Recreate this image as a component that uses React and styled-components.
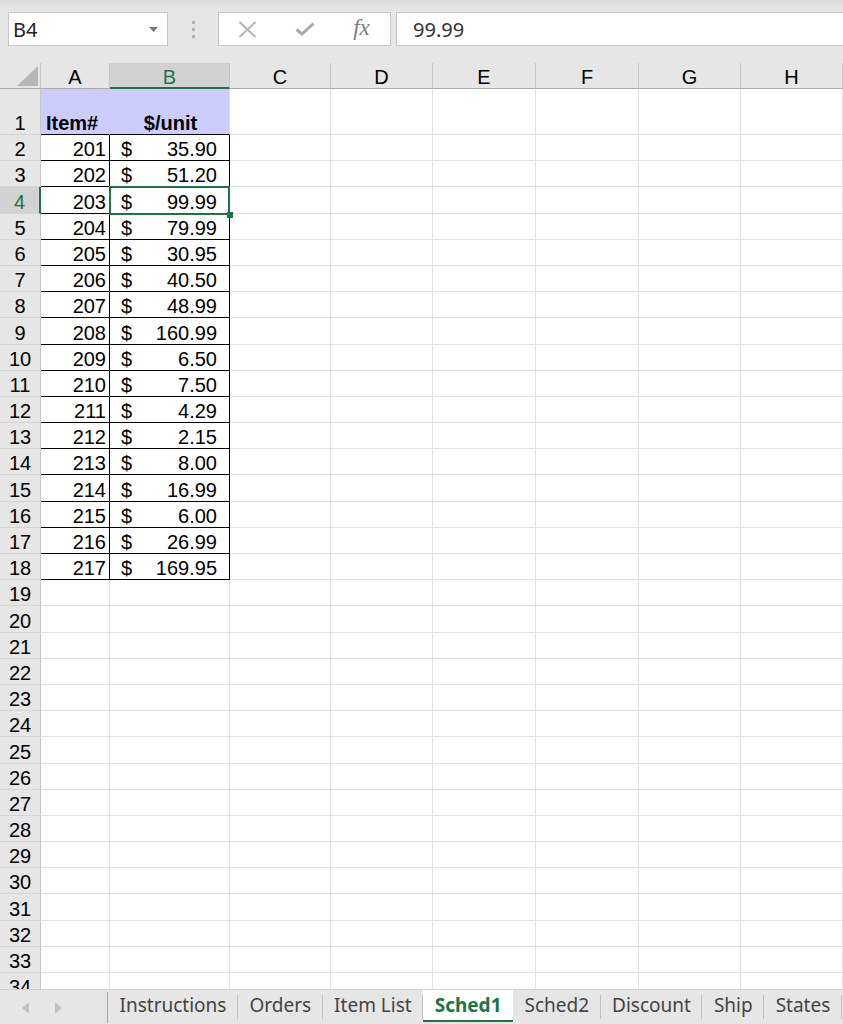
import styled, {createGlobalStyle, css} from 'styled-components'

const GREEN = '#217346'
const GRID = '#e1e1e1'
const HEAD_LINE = '#c6c6c6'

const COLUMNS = [
  {name: 'A', width: 69},
  {name: 'B', width: 120},
  {name: 'C', width: 101},
  {name: 'D', width: 102},
  {name: 'E', width: 103},
  {name: 'F', width: 103},
  {name: 'G', width: 102},
  {name: 'H', width: 102},
]

const ITEMS = [
  [201, '35.90'], [202, '51.20'], [203, '99.99'], [204, '79.99'], [205, '30.95'],
  [206, '40.50'], [207, '48.99'], [208, '160.99'], [209, '6.50'], [210, '7.50'],
  [211, '4.29'], [212, '2.15'], [213, '8.00'], [214, '16.99'], [215, '6.00'],
  [216, '26.99'], [217, '169.95'],
]

const TABS = ['Instructions', 'Orders', 'Item List', 'Sched1', 'Sched2', 'Discount', 'Ship', 'States']
const ACTIVE_TAB = 'Sched1'
const ROW_COUNT = 34
const SEL = {col: 'B', row: 4}

const GlobalStyle = createGlobalStyle`
  html, body { margin: 0; padding: 0; background: #e6e6e6; }
  body { font-family: "Liberation Sans", Arial, sans-serif; }
`

const Window = styled.div`
  width: 843px;
  height: 1024px;
  display: flex;
  flex-direction: column;
  overflow: hidden;
  background: #e6e6e6;
`

/* formula bar */
const Toolbar = styled.div`
  height: 63px;
  flex: none;
  box-sizing: border-box;
  display: flex;
  align-items: flex-start;
  padding: 12px 0 0 8px;
  background: linear-gradient(#dcdcdc, #e6e6e6 9px);
`

const NameBox = styled.div`
  width: 160px;
  height: 34px;
  box-sizing: border-box;
  border: 1px solid ${HEAD_LINE};
  background: #fff;
  display: flex;
  align-items: center;
  justify-content: space-between;
  padding: 0 9px 0 4px;
  font: 20px "Noto Sans", sans-serif;
  color: #222;
`

const Grip = styled.div`
  width: 50px;
  height: 34px;
  display: flex;
  flex-direction: column;
  align-items: center;
  justify-content: center;
  gap: 4px;

  span {
    width: 3px;
    height: 3px;
    background: #b4b4b4;
  }
`

const FxBox = styled.div`
  width: 173px;
  height: 34px;
  box-sizing: border-box;
  border: 1px solid ${HEAD_LINE};
  background: #fff;
  display: grid;
  grid-template-columns: repeat(3, 57px);
  align-items: center;
  justify-items: center;
`

const FxLabel = styled.span`
  font: italic 23px "Liberation Serif", serif;
  color: #7a7a7a;
  margin-top: -2px;
`

const FormulaInput = styled.div`
  flex: 1;
  height: 34px;
  margin-left: 5px;
  box-sizing: border-box;
  border: 1px solid ${HEAD_LINE};
  border-right: none;
  background: #fff;
  display: flex;
  align-items: center;
  padding-left: 16px;
  font: 20px "Noto Sans", sans-serif;
  color: #333;
`

/* sheet grid */
const Sheet = styled.div`
  flex: 1;
  min-height: 0;
  overflow: hidden;
  background: #fff;
  display: grid;
  grid-template-columns: 41px ${COLUMNS.map(c => c.width + 'px').join(' ')};
  grid-template-rows: 26px 46px repeat(${ROW_COUNT - 1}, 26.2px);
  align-content: start;
`

const Corner = styled.div`
  box-sizing: border-box;
  background: #e6e6e6;
  border-right: 1px solid ${HEAD_LINE};
  border-bottom: 1px solid #ababab;
  display: flex;
  align-items: flex-end;
  justify-content: flex-end;
  padding: 0 2px 2px 0;
`

const ColHead = styled.div`
  box-sizing: border-box;
  background: ${p => (p.$active ? '#d2d2d2' : '#e6e6e6')};
  border-right: 1px solid ${HEAD_LINE};
  border-bottom: ${p => (p.$active ? `2px solid ${GREEN}` : '1px solid #ababab')};
  color: ${p => (p.$active ? GREEN : '#000')};
  display: flex;
  align-items: center;
  justify-content: center;
  padding-top: 4px;
  font: 20px "Liberation Sans", Arial, sans-serif;
`

const RowHead = styled.div`
  box-sizing: border-box;
  background: ${p => (p.$active ? '#d2d2d2' : '#e6e6e6')};
  border-right: ${p => (p.$active ? `2px solid ${GREEN}` : `1px solid ${HEAD_LINE}`)};
  border-bottom: 1px solid #d4d4d4;
  color: ${p => (p.$active ? GREEN : '#000')};
  display: flex;
  align-items: flex-end;
  justify-content: center;
  font: 20px/21px "Liberation Sans", Arial, sans-serif;
`

const Cell = styled.div`
  box-sizing: border-box;
  position: relative;
  min-width: 0;
  background: ${p => p.$fill || '#fff'};
  border-right: 1px solid ${p => p.$edgeRight || GRID};
  border-bottom: 1px solid ${p => p.$edgeBottom || GRID};
  display: flex;
  align-items: flex-end;
  justify-content: ${p => p.$align || 'flex-start'};
  padding: 0 3px 0 5px;
  font: ${p => (p.$bold ? 700 : 400)} 20px/21px "Liberation Sans", Arial, sans-serif;
  color: #000;
  white-space: nowrap;

  ${p => p.$selected && css`
    &::after {
      content: '';
      position: absolute;
      top: -1px;
      left: -1px;
      right: -1px;
      bottom: -2px;
      border: 2px solid ${GREEN};
      z-index: 2;
    }
    &::before {
      content: '';
      position: absolute;
      right: -4px;
      bottom: -5px;
      width: 6px;
      height: 6px;
      background: ${GREEN};
      z-index: 3;
    }
  `}
`

const Money = styled.span`
  flex: 1;
  display: flex;
  justify-content: space-between;
  padding: 0 9px 0 6px;
`

/* sheet tabs */
const TabBar = styled.div`
  height: 35px;
  flex: none;
  box-sizing: border-box;
  display: flex;
  align-items: flex-start;
  background: #e6e6e6;
  border-top: 1px solid #d0d0d0;
  overflow: hidden;
`

const TabNav = styled.div`
  flex: none;
  width: 108px;
  height: 31px;
  box-sizing: border-box;
  display: flex;
  align-items: center;
  gap: 26px;
  padding-left: 22px;
  border-right: 1px solid #a8a8a8;
  margin-top: 2px;
`

const Tab = styled.div`
  flex: none;
  position: relative;
  height: 32px;
  box-sizing: border-box;
  display: flex;
  align-items: center;
  padding: 0 11.5px 2px;
  background: ${p => (p.$active ? '#fff' : 'transparent')};
  box-shadow: ${p => (p.$active ? `inset 0 -2px 0 ${GREEN}` : 'none')};
  color: ${p => (p.$active ? GREEN : '#444')};
  font: ${p => (p.$active ? 700 : 400)} 19px "Noto Sans", sans-serif;
  white-space: nowrap;

  &::after {
    content: '';
    position: absolute;
    right: 0;
    top: 5px;
    bottom: 3px;
    width: 1px;
    background: ${p => (p.$active ? 'transparent' : '#c0c0c0')};
  }
`

function cellProps(col, row) {
  const inTable = row >= 2 && row <= 18
  if (row === 1 && col === 'A') {
    return {$fill: '#ccccff', $edgeRight: '#ccccff', $edgeBottom: '#000', $bold: true}
  }
  if (row === 1 && col === 'B') {
    return {$fill: '#ccccff', $edgeBottom: '#000', $bold: true, $align: 'center'}
  }
  if (inTable && col === 'A') {
    return {$edgeRight: '#000', $edgeBottom: '#000', $align: 'flex-end'}
  }
  if (inTable && col === 'B') {
    return {$edgeRight: '#000', $edgeBottom: '#000'}
  }
  return {}
}

function cellContent(col, row) {
  if (row === 1) return col === 'A' ? 'Item#' : col === 'B' ? '$/unit' : null
  const item = ITEMS[row - 2]
  if (!item) return null
  if (col === 'A') return item[0]
  if (col === 'B') {
    return (
      <Money>
        <span>$</span>
        <span>{item[1]}</span>
      </Money>
    )
  }
  return null
}

export default function App() {
  const rows = Array.from({length: ROW_COUNT}, (_, i) => i + 1)
  return (
    <Window>
      <GlobalStyle />
      <Toolbar>
        <NameBox>
          <span>B4</span>
          <svg width="9" height="5" viewBox="0 0 9 5"><polygon points="0,0 9,0 4.5,5" fill="#777" /></svg>
        </NameBox>
        <Grip><span /><span /><span /></Grip>
        <FxBox>
          <svg width="19" height="17" viewBox="0 0 19 17">
            <path d="M1.5 1 L17.5 16 M17.5 1 L1.5 16" stroke="#b0b0b0" strokeWidth="1.8" fill="none" />
          </svg>
          <svg width="20" height="14" viewBox="0 0 20 14">
            <path d="M1.5 7.5 L7 12 L18.5 1.5" stroke="#a8a8a8" strokeWidth="3" fill="none" />
          </svg>
          <FxLabel>fx</FxLabel>
        </FxBox>
        <FormulaInput>99.99</FormulaInput>
      </Toolbar>

      <Sheet>
        <Corner>
          <svg width="21" height="20" viewBox="0 0 21 20"><polygon points="21,0 21,20 0,20" fill="#b6b6b6" /></svg>
        </Corner>
        {COLUMNS.map(c => (
          <ColHead key={c.name} $active={c.name === SEL.col}>{c.name}</ColHead>
        ))}
        {rows.map(r => [
          <RowHead key={'h' + r} $active={r === SEL.row}>{r}</RowHead>,
          ...COLUMNS.map(c => (
            <Cell
              key={c.name + r}
              {...cellProps(c.name, r)}
              $selected={c.name === SEL.col && r === SEL.row}
            >
              {cellContent(c.name, r)}
            </Cell>
          )),
        ])}
      </Sheet>

      <TabBar>
        <TabNav>
          <svg width="7" height="12" viewBox="0 0 7 12"><polygon points="7,0 7,12 0,6" fill="#c2c2c2" /></svg>
          <svg width="7" height="12" viewBox="0 0 7 12"><polygon points="0,0 0,12 7,6" fill="#c2c2c2" /></svg>
        </TabNav>
        {TABS.map(t => (
          <Tab key={t} $active={t === ACTIVE_TAB}>{t}</Tab>
        ))}
      </TabBar>
    </Window>
  )
}
